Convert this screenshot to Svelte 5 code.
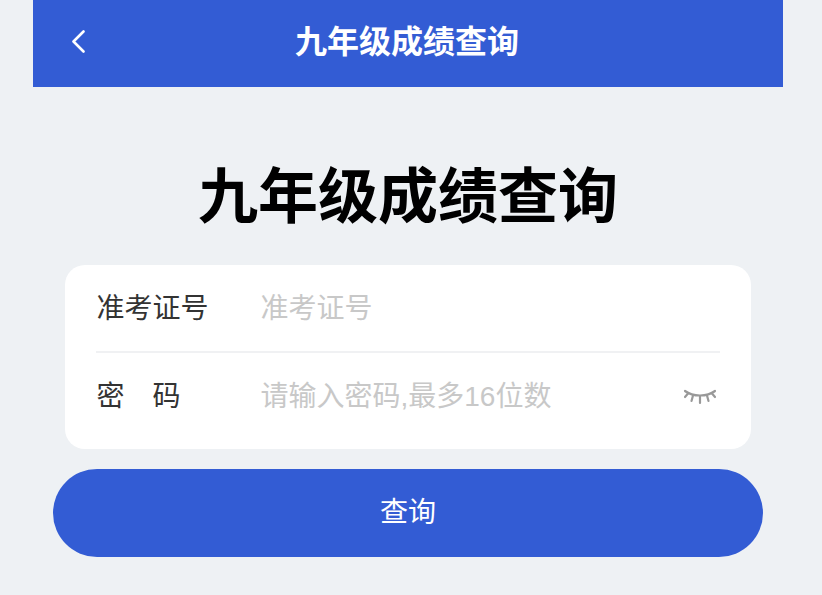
<script>
    let showPwd = $state(false);
</script>

<div class="page">
    <header class="bar">
        <button class="back" aria-label="back">
            <svg width="16" height="24" viewBox="0 0 16 24"><path d="M12.5 2.5 L2.5 12.5 L12.5 22.5" fill="none" stroke="#fff" stroke-width="2.6" stroke-linecap="round" stroke-linejoin="round" /></svg>
        </button>
        <span class="bar-title">九年级成绩查询</span>
    </header>

    <h1>九年级成绩查询</h1>

    <form class="card" onsubmit={e => e.preventDefault()}>
        <div class="row">
            <label for="num">准考证号</label>
            <input id="num" placeholder="准考证号" />
        </div>
        <div class="row">
            <label for="pwd" class="spaced"><span>密</span><span>码</span></label>
            <input id="pwd" type={showPwd ? 'text' : 'password'} placeholder="请输入密码,最多16位数" />
            <button type="button" class="eye" aria-label="toggle" onclick={() => showPwd = !showPwd}>
                <svg width="34" height="16" viewBox="0 0 34 16" fill="none" stroke="#999" stroke-width="2.2" stroke-linecap="round">
                    <path d="M2 2 C10 8 24 8 32 2" />
                    <path d="M5 4.5 L2 8 M10 6.5 L8.5 12 M17 7.5 L17 14 M24 6.5 L25.5 12 M29 4.5 L32 8" />
                </svg>
            </button>
        </div>
    </form>

    <div class="action">
        <button class="submit">查询</button>
    </div>
</div>

<style>
:global(body) {
    background: #eef1f4;
}
.page {
    width: 750px;
    margin-left: 33px;
    font-family: "Liberation Sans", "Noto Sans CJK SC", sans-serif;
}
.bar {
    height: 87px;
    box-sizing: border-box;
    padding-bottom: 10px;
    background: #335cd4;
    display: flex;
    align-items: center;
    justify-content: center;
    position: relative;
}
.bar-title {
    color: #fff;
    font-size: 32px;
    font-weight: 700;
    margin-left: -2px;
}
.back {
    position: absolute;
    left: 38px;
    top: 29px;
    padding: 0;
    border: none;
    background: none;
    line-height: 0;
}
h1 {
    margin: 76px 0 0;
    height: 70px;
    line-height: 70px;
    text-align: center;
    font-size: 60px;
    font-weight: 700;
    color: #000;
}
.card {
    margin: 32px 32px 0;
    padding: 0 31px;
    background: #fff;
    border-radius: 20px;
}
.row {
    height: 86px;
    padding-top: 2px;
    display: flex;
    align-items: center;
    box-sizing: border-box;
}
.row + .row {
    border-top: 2px solid #f0f1f3;
    height: 98px;
    padding-top: 0;
    padding-bottom: 8px;
}
label {
    width: 164px;
    padding-left: 0.5px;
    flex: none;
    font-size: 28px;
    line-height: 40px;
    color: #333;
}
.spaced span + span {
    margin-left: 28px;
}
input {
    flex: 1;
    min-width: 0;
    height: 40px;
    border: none;
    outline: none;
    padding: 0;
    font: inherit;
    font-size: 28px;
    color: #333;
}
input::placeholder {
    color: #c8c8c8;
}
.eye {
    margin-right: 3px;
    padding: 0;
    border: none;
    background: none;
    line-height: 0;
}
.action {
    margin: 20px 20px 0;
}
.submit {
    width: 100%;
    height: 88px;
    padding: 0 0 6px;
    border: none;
    border-radius: 44px;
    background: #335cd4;
    color: #fff;
    font: inherit;
    font-size: 28px;
}
</style>
